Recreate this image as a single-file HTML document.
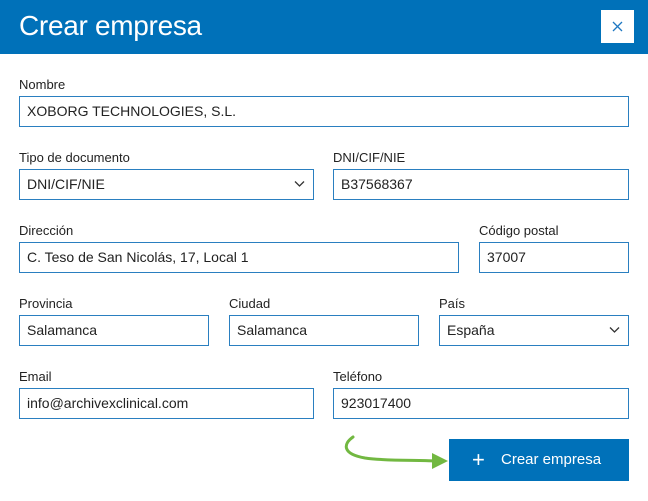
<!DOCTYPE html>
<html><head><meta charset="utf-8"><style>
*{box-sizing:border-box;margin:0;padding:0}
body{width:648px;height:501px;background:#fff;font-family:"Liberation Sans",sans-serif;position:relative;overflow:hidden;color:#222}
.hd{position:absolute;left:0;top:0;width:648px;height:54px;background:#0071b9}
.hd h1{position:absolute;left:19px;top:10px;font-weight:normal;font-size:28px;color:#fff;letter-spacing:-0.3px}
.x{position:absolute;left:601px;top:10px;width:33px;height:33px;background:#fff}
.l{position:absolute;font-size:13px;color:#222}
.i{position:absolute;height:31px;border:1px solid #2a7fc0;font-size:14px;padding-left:7px;line-height:29px;color:#222}
.chev{position:absolute;right:8px;top:10px}
.btn{position:absolute;left:449px;top:439px;width:180px;height:42px;background:#0071b9;color:#fff;font-size:15px;line-height:42px}
</style></head><body>
<div class="hd"><h1>Crear empresa</h1>
<div class="x"><svg width="33" height="33"><path d="M12 12L21 21M21 12L12 21" stroke="#1e78c2" stroke-width="1.3"/></svg></div></div>

<div class="l" style="left:19px;top:77px">Nombre</div>
<div class="i" style="left:19px;top:96px;width:610px">XOBORG TECHNOLOGIES, S.L.</div>

<div class="l" style="left:19px;top:150px">Tipo de documento</div>
<div class="i" style="left:19px;top:169px;width:295px">DNI/CIF/NIE<svg class="chev" width="11" height="8"><path d="M1 1.5L5.5 6L10 1.5" stroke="#333" fill="none" stroke-width="1.3"/></svg></div>
<div class="l" style="left:333px;top:150px">DNI/CIF/NIE</div>
<div class="i" style="left:333px;top:169px;width:296px">B37568367</div>

<div class="l" style="left:19px;top:223px">Dirección</div>
<div class="i" style="left:19px;top:242px;width:440px">C. Teso de San Nicolás, 17, Local 1</div>
<div class="l" style="left:479px;top:223px">Código postal</div>
<div class="i" style="left:479px;top:242px;width:150px">37007</div>

<div class="l" style="left:19px;top:296px">Provincia</div>
<div class="i" style="left:19px;top:315px;width:190px">Salamanca</div>
<div class="l" style="left:229px;top:296px">Ciudad</div>
<div class="i" style="left:229px;top:315px;width:190px">Salamanca</div>
<div class="l" style="left:439px;top:296px">País</div>
<div class="i" style="left:439px;top:315px;width:190px">España<svg class="chev" width="11" height="8"><path d="M1 1.5L5.5 6L10 1.5" stroke="#333" fill="none" stroke-width="1.3"/></svg></div>

<div class="l" style="left:19px;top:369px">Email</div>
<div class="i" style="left:19px;top:388px;width:295px">info@archivexclinical.com</div>
<div class="l" style="left:333px;top:369px">Teléfono</div>
<div class="i" style="left:333px;top:388px;width:296px">923017400</div>

<svg style="position:absolute;left:340px;top:430px" width="110" height="45"><path d="M13 7C3 14 2 24 25 28C45 31 75 30 95 31" stroke="#72b841" stroke-width="3" fill="none" stroke-linecap="round"/><path d="M92 23L108 31L92 39Z" fill="#72b841"/></svg>
<div class="btn"><span style="position:absolute;left:23px;font-size:22px;font-weight:300">+</span><span style="position:absolute;left:52px">Crear empresa</span></div>
</body></html>
